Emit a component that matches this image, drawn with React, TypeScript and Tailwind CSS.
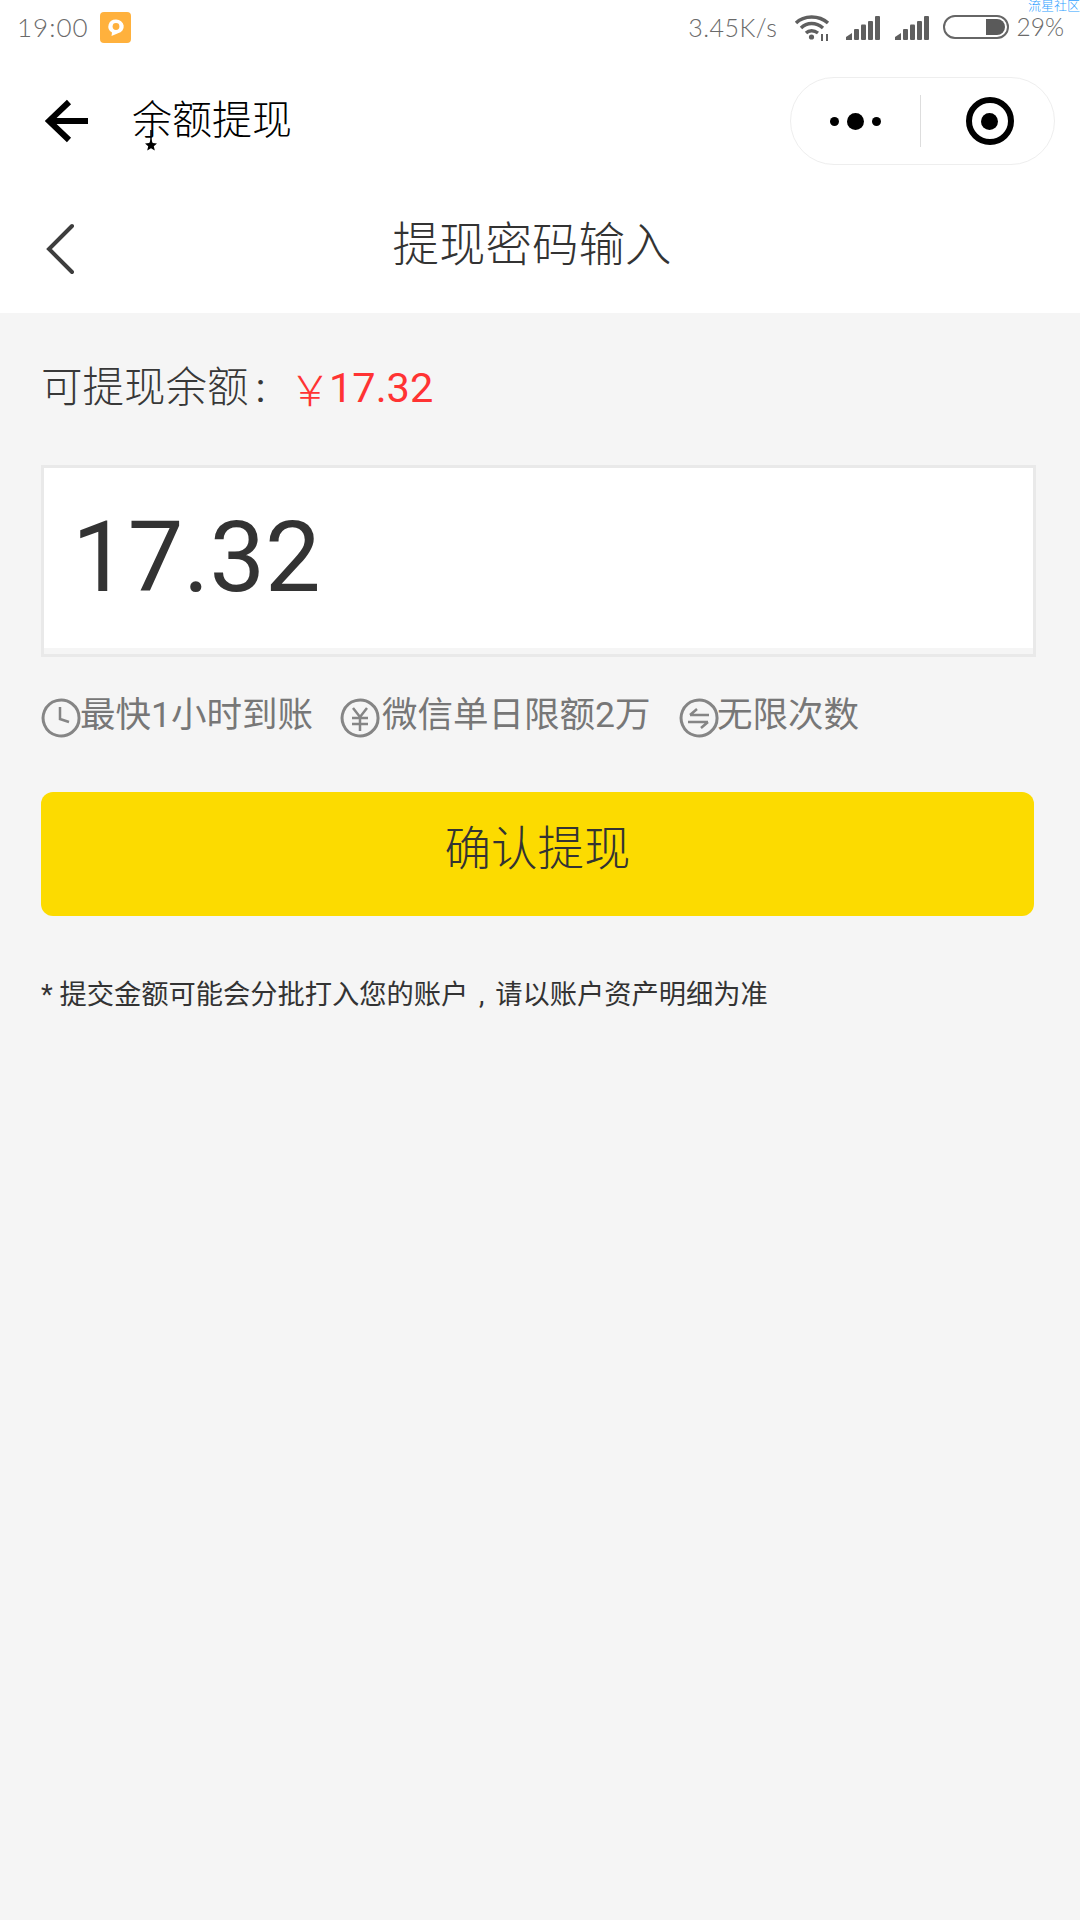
import React from 'react';

const CJK = '"Roboto", "Noto Sans CJK SC", sans-serif';

const Signal = () => (
  <svg width="34" height="24" viewBox="0 0 34 24" fill="#5f5f5f">
    <path d="M0 24 L0 21 L6 17 L6 24 Z" />
    <rect x="8" y="13" width="5" height="11" rx="1" />
    <rect x="15" y="8.5" width="5" height="15.5" rx="1" />
    <rect x="22" y="5" width="5" height="19" rx="1" />
    <rect x="29" y="0" width="5" height="24" rx="1" />
  </svg>
);

const TipIcon = ({ children }: { children: React.ReactNode }) => (
  <svg width="40" height="40" viewBox="0 0 40 40" fill="none" stroke="#858585" strokeWidth="3" className="shrink-0">
    <path d="M3.5 13 A18 18 0 1 1 3.5 27 A18 18 0 0 1 3.5 13 Z" />
    {children}
  </svg>
);

const Tip = ({ icon, text, className, textClass }: { icon: React.ReactNode; text: string; className: string; textClass: string }) => (
  <div className={`flex items-start ${className}`}>
    <div className="mt-[5px]">{icon}</div>
    <span className={`text-[35.5px] leading-[40px] text-[#777777] mt-[2px] ${textClass}`}>{text}</span>
  </div>
);

export default function App() {
  return (
    <div className="w-[1080px] h-[1920px] bg-[#f5f5f5] flex flex-col" style={{ fontFamily: CJK }}>
      {/* Status bar */}
      <div className="relative h-[55px] bg-white flex items-start pt-[12px] pl-[17px] pr-[16px] text-[#6a6a6a] font-light">
        <span className="text-[26px] leading-[30px] tracking-[1px] w-[83px]" style={{ fontFamily: 'Lato, sans-serif' }}>19:00</span>
        <div className="w-[31px] h-[31px] rounded-[4px] bg-[#ffb13d] flex items-center justify-center">
          <svg width="20" height="20" viewBox="0 0 20 20">
            <path d="M10 1.5 a7.5 7 0 0 1 2 13.8 L5.5 18 L6 14.5 a7.5 7 0 0 1 4 -13 Z" fill="#fff" />
            <circle cx="10" cy="8.5" r="3.4" fill="#ffb13d" />
          </svg>
        </div>
        <div className="ml-auto flex items-start">
          <span className="text-[25px] leading-[30px] tracking-[0.5px]" style={{ fontFamily: 'Lato, sans-serif' }}>3.45K/s</span>
          <svg width="36" height="28" viewBox="0 0 36 28" className="ml-[17px] mt-[2px]" fill="none" stroke="#5f5f5f" strokeWidth="3.4">
            <path d="M2 9 C10 1 25 1 34 9" />
            <path d="M7 14 C13 8 22 8 29 14" />
            <path d="M12 19 C15 16 20 16 24 19" />
            <circle cx="17.5" cy="23" r="2.6" fill="#5f5f5f" stroke="none" />
            <path d="M28 20 V27 M33 20 V27" strokeWidth="2" />
          </svg>
          <div className="ml-[16px] mt-[4px]"><Signal /></div>
          <div className="ml-[15px] mt-[4px]"><Signal /></div>
          <div className="ml-[14px] mt-[3px] w-[66px] h-[24px] rounded-full border-[2px] border-[#666666] flex justify-end items-center pr-[2px]">
            <div className="w-[19px] h-[16px] bg-[#5a5a5a] rounded-r-[8px]" />
          </div>
          <span className="text-[24.5px] leading-[30px] ml-[7px]" style={{ fontFamily: 'Lato, sans-serif' }}>29%</span>
        </div>
        <span className="absolute top-[-3px] right-0 text-[13px] leading-[18px] text-[#2f9fff]">流星社区</span>
      </div>

      {/* WeChat mini program nav */}
      <div className="h-[130px] bg-white flex items-center pt-[2px] pl-[45px] pr-[25px]">
        <svg width="44" height="44" viewBox="0 0 44 44" fill="none" stroke="#000" strokeWidth="6" className="shrink-0">
          <path d="M24 3 L4 22 L24 41" />
          <path d="M4 22 H43" />
        </svg>
        <div className="relative ml-[43px]">
          <span className="text-[40px] leading-[48px] font-light text-black">余额提现</span>
          <svg width="14" height="22" viewBox="0 0 14 22" className="absolute left-[12px] top-[33px]">
            <path d="M7 0 V12" stroke="#000" strokeWidth="1.5" />
            <path d="M7 9 L8.7 13 L13 13.4 L9.8 16.2 L10.8 20.5 L7 18.2 L3.2 20.5 L4.2 16.2 L1 13.4 L5.3 13 Z" fill="#000" />
          </svg>
        </div>
        <div className="ml-auto w-[265px] h-[88px] rounded-[44px] border border-[#eeeeee] flex items-center bg-white">
          <div className="flex-1 flex items-center justify-center gap-[8px]">
            <span className="w-[9px] h-[9px] rounded-full bg-black" />
            <span className="w-[17px] h-[17px] rounded-full bg-black" />
            <span className="w-[9px] h-[9px] rounded-full bg-black" />
          </div>
          <div className="w-px h-[52px] bg-[#dddddd]" />
          <div className="flex-1 flex items-center justify-center pl-[4px]">
            <div className="w-[48px] h-[48px] rounded-full border-[6px] border-black flex items-center justify-center">
              <span className="w-[17px] h-[17px] rounded-full bg-black" />
            </div>
          </div>
        </div>
      </div>

      {/* Page header */}
      <div className="relative h-[128px] bg-white flex items-center justify-center">
        <svg width="30" height="52" viewBox="0 0 30 52" fill="none" stroke="#3d3d3d" strokeWidth="4" strokeLinecap="round" className="absolute left-[46px] top-[38px]">
          <path d="M26 3 L3 26 L26 49" />
        </svg>
        <h1 className="text-[46.5px] leading-[56px] font-light text-[#333333] -mt-[8px] -translate-x-[8px]">提现密码输入</h1>
      </div>

      {/* Body */}
      <div className="flex-1 flex flex-col pl-[41px] pr-[46px]">
        <div className="flex items-center mt-[50px] h-[50px]">
          <span className="text-[41.5px] text-[#383838] font-light w-[253px] mt-[1px]">
            可提现余额<span className="inline-block w-[24px] text-center font-normal">:</span>
          </span>
          <span className="text-[#ff3333] text-[42px] w-[35px] font-light leading-[50px] -translate-x-[5px] whitespace-nowrap font-['Noto_Sans_CJK_SC']">{'\uFFE5'}</span>
          <span className="text-[#ff3333] text-[41.5px] font-normal">17.32</span>
        </div>

        <div className="mt-[52px] -mr-[2px] h-[192px] border-[3px] border-[#e9e9e9] bg-white flex flex-col">
          <div className="flex-1 pl-[28px] flex items-center">
            <span className="text-[99px] leading-[100px] text-[#333333] -mt-[3px]">17.32</span>
          </div>
          <div className="h-[6px] bg-[#f5f5f5]" />
        </div>

        <div className="flex mt-[36px] h-[44px]">
          <Tip
            className="w-[299px]"
            textClass="-ml-px"
            text="最快1小时到账"
            icon={
              <TipIcon>
                <path d="M19 9 V21 L28 24" strokeWidth="2.5" />
              </TipIcon>
            }
          />
          <Tip
            className="w-[339px]"
            textClass="ml-[2px]"
            text="微信单日限额2万"
            icon={
              <TipIcon>
                <path d="M13 10 L20 19 L27 10 M12 20 H28 M12 26 H28 M20 19 V33" strokeWidth="2.5" />
              </TipIcon>
            }
          />
          <Tip
            className="w-[240px]"
            textClass="-ml-[2px]"
            text="无限次数"
            icon={
              <TipIcon>
                <path d="M11 17 H30 M11 17 L18 11 M9 24 H29 M29 24 L22 30" strokeWidth="2.5" />
              </TipIcon>
            }
          />
        </div>

        <button className="mt-[55px] h-[124px] rounded-[12px] bg-[#fcdb00] text-[46.5px] font-light text-[#333333] flex items-center justify-center pb-[8px]">
          确认提现
        </button>

        <p className="mt-[61px] text-[27.25px] leading-[36px] text-[#333333]">
          * 提交金额可能会分批打入您的账户<span className="inline-block w-[27px] text-center">,</span>请以账户资产明细为准
        </p>
      </div>
    </div>
  );
}
